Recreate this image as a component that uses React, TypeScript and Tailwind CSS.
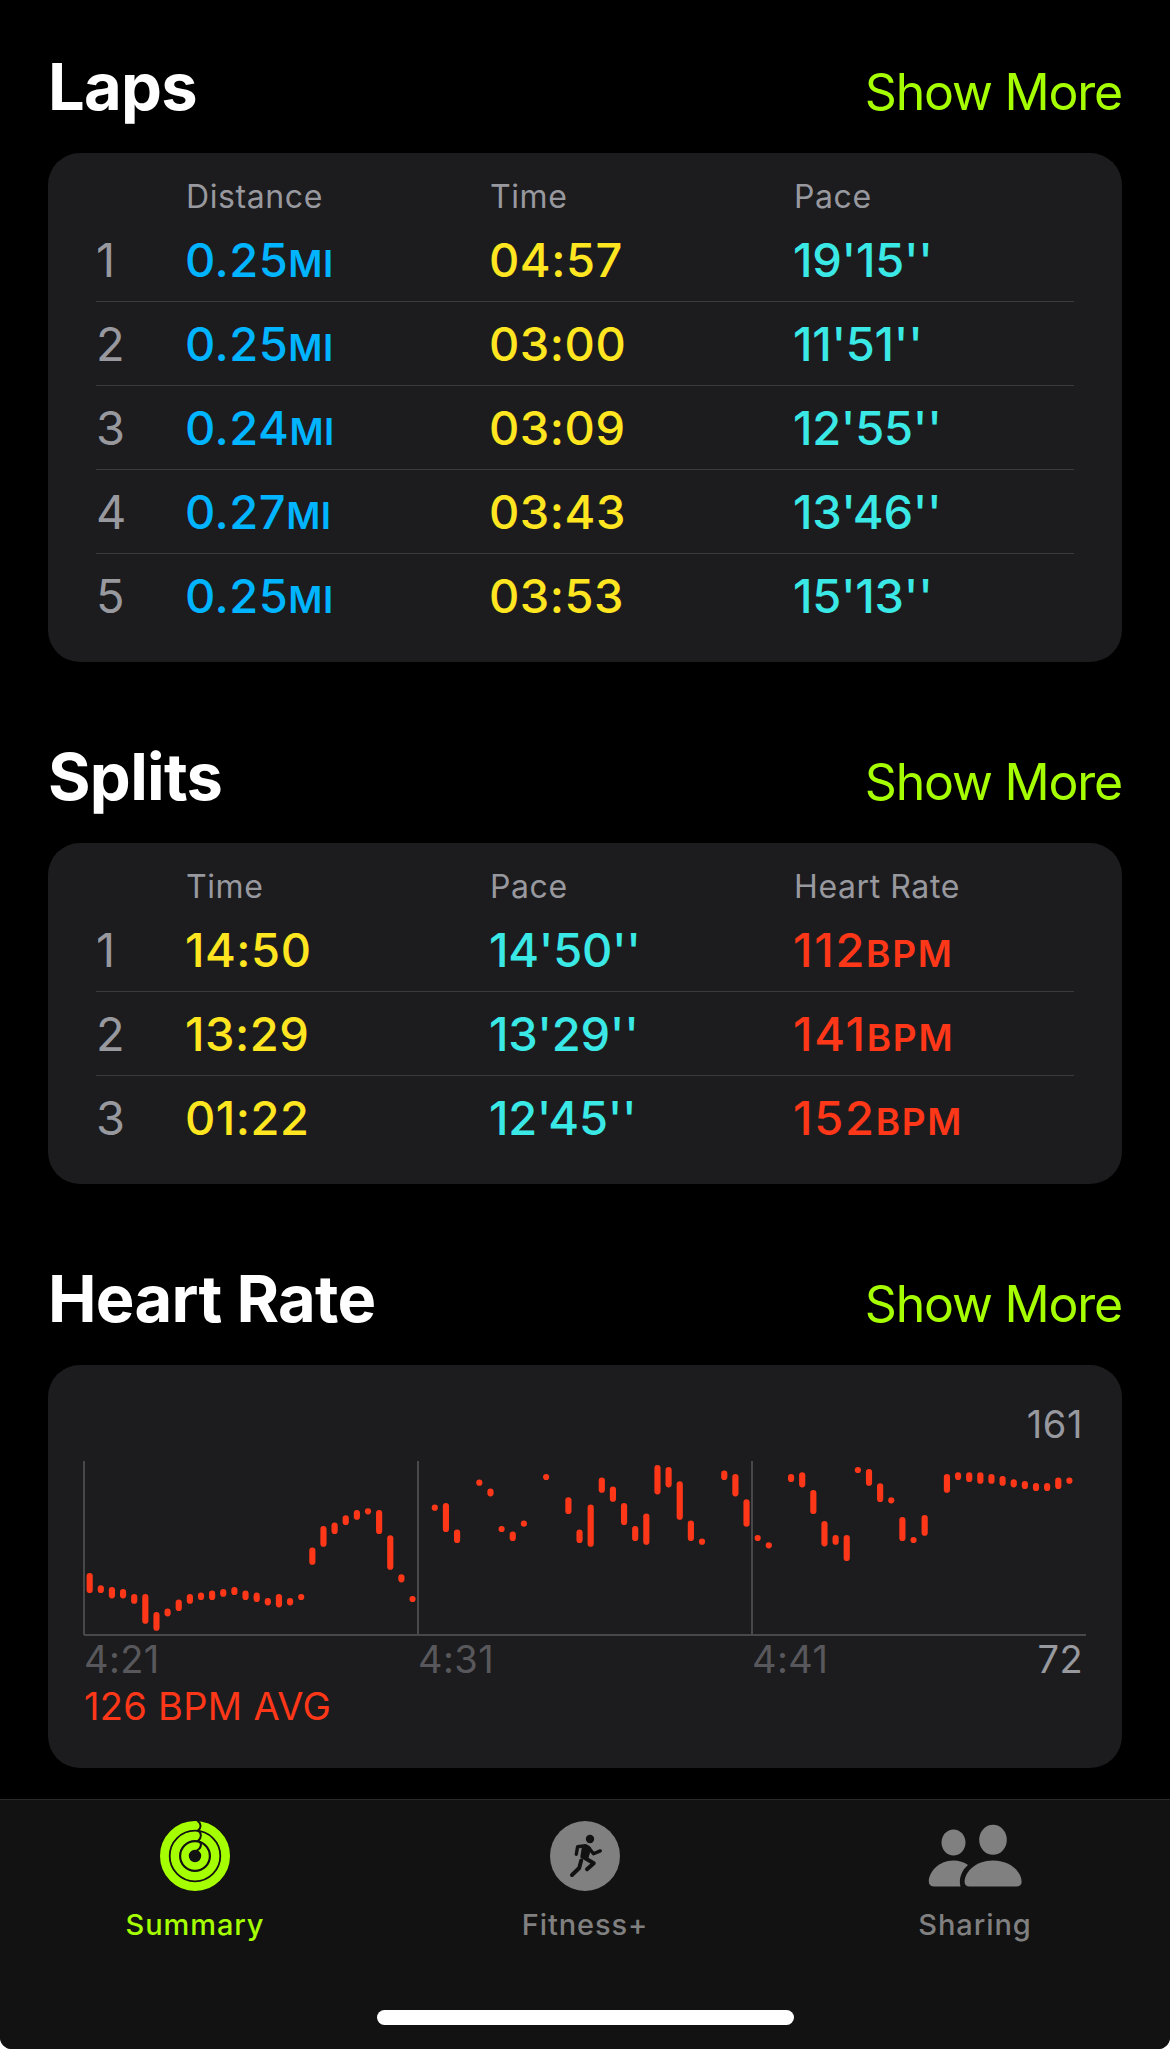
import clsx from "clsx";
import type { ReactNode } from "react";

type Cell = { value: string; unit?: string; color: string };

const BLUE = "text-[#00b4ff] tracking-[0.5px]";
const YELLOW = "text-[#ffe620] tracking-[0.5px]";
const CYAN = "text-[#3ae8e6] tracking-[-0.3px]";
const RED = "text-[#ff3719] tracking-[1.7px]";

const laps: Cell[][] = [
  [{ value: "0.25", unit: "MI", color: BLUE }, { value: "04:57", color: YELLOW }, { value: "19'15''", color: CYAN }],
  [{ value: "0.25", unit: "MI", color: BLUE }, { value: "03:00", color: YELLOW }, { value: "11'51''", color: CYAN }],
  [{ value: "0.24", unit: "MI", color: BLUE }, { value: "03:09", color: YELLOW }, { value: "12'55''", color: CYAN }],
  [{ value: "0.27", unit: "MI", color: BLUE }, { value: "03:43", color: YELLOW }, { value: "13'46''", color: CYAN }],
  [{ value: "0.25", unit: "MI", color: BLUE }, { value: "03:53", color: YELLOW }, { value: "15'13''", color: CYAN }],
];

const splits: Cell[][] = [
  [{ value: "14:50", color: YELLOW }, { value: "14'50''", color: CYAN }, { value: "112", unit: "BPM", color: RED }],
  [{ value: "13:29", color: YELLOW }, { value: "13'29''", color: CYAN }, { value: "141", unit: "BPM", color: RED }],
  [{ value: "01:22", color: YELLOW }, { value: "12'45''", color: CYAN }, { value: "152", unit: "BPM", color: RED }],
];

// [slot, top, bottom] in chart units, slots without a reading are left out
const heartRate = [
  [0, 399, 459], [1, 436, 459], [2, 441, 475], [3, 447, 475], [4, 462, 491], [5, 462, 551],
  [6, 516, 572], [7, 506, 529], [8, 479, 513], [9, 462, 491], [10, 458, 480], [11, 452, 480],
  [12, 447, 470], [13, 441, 465], [14, 452, 480], [15, 458, 486], [16, 474, 496], [17, 462, 502],
  [18, 474, 496], [19, 462, 480], [20, 323, 374], [21, 258, 320], [22, 248, 282], [23, 226, 255],
  [24, 210, 239], [25, 205, 223], [26, 210, 282], [27, 286, 389], [28, 403, 427], [29, 468, 486],
  [31, 194, 212], [32, 189, 276], [33, 269, 309], [35, 119, 137], [36, 146, 169], [37, 258, 276],
  [38, 275, 303], [39, 242, 260], [41, 102, 120], [43, 172, 222], [44, 269, 309], [45, 194, 320],
  [46, 113, 158], [47, 140, 185], [48, 189, 255], [49, 258, 303], [50, 221, 314], [51, 75, 163],
  [52, 81, 142], [53, 124, 239], [54, 242, 303], [55, 296, 314], [57, 92, 120], [58, 102, 169],
  [59, 178, 260], [60, 285, 303], [61, 307, 325], [63, 102, 126], [64, 97, 142], [65, 150, 222],
  [66, 243, 319], [67, 285, 314], [68, 285, 363], [69, 81, 99], [70, 87, 137], [71, 130, 186],
  [72, 172, 190], [73, 231, 303], [74, 291, 309], [75, 225, 287], [77, 102, 158], [78, 97, 120],
  [79, 97, 126], [80, 97, 131], [81, 102, 131], [82, 108, 137], [83, 118, 142], [84, 123, 147],
  [85, 129, 153], [86, 129, 153], [87, 113, 147], [88, 113, 131],
];

const Section = ({ title, className, children }: { title: string; className?: string; children: ReactNode }) => (
  <section className={className}>
    <div className="flex h-[105px] items-baseline justify-between">
      <h2 className="text-[65px] font-bold leading-[78px] tracking-[-0.7px] text-white">{title}</h2>
      <button className="text-[50px] leading-[60px] tracking-[-1.2px] text-[#a6ff00]">Show More</button>
    </div>
    <div className="rounded-[32px] bg-[#1c1c1e]">{children}</div>
  </section>
);

const Table = ({ columns, rows }: { columns: string[]; rows: Cell[][] }) => (
  <div className="px-12 py-6">
    <div className="flex h-[41px] pl-[90px] text-[32px] leading-10 tracking-[0.6px] text-[#98989f]">
      {columns.map((column) => (
        <div key={column} className="w-[304px] shrink-0">{column}</div>
      ))}
    </div>
    {rows.map((row, i) => (
      <div
        key={i}
        className={clsx("flex h-[84px] items-baseline pt-px leading-[82px]", i < rows.length - 1 && "border-b border-[#3b3b3d]")}
      >
        <div className="w-[89px] shrink-0 text-[47px] text-[#98989f]">{i + 1}</div>
        {row.map((cell, j) => (
          <div key={j} className={clsx("w-[304px] shrink-0 whitespace-nowrap text-[47px] font-medium", cell.color)}>
            {cell.value}
            {cell.unit && <span className="text-[37px] font-semibold">{cell.unit}</span>}
          </div>
        ))}
      </div>
    ))}
  </div>
);

const HeartRateChart = () => (
  <div className="h-[403px] pl-[35px] pr-9 pt-9">
    <div className="h-[60px] pr-[3px] text-right text-[38px] leading-[46px] tracking-[0.6px] text-[#98989f]">161</div>
    <svg className="block h-[175px] w-[1003px]" viewBox="0 63 3009 525">
      <path d="M3 63V585M1005 63V582M2007 63V582M3 585H3009" fill="none" stroke="#48484a" strokeWidth="6" />
      {heartRate.map(([slot, top, bottom]) => (
        <line
          key={slot}
          x1={20 + slot * 33.4}
          x2={20 + slot * 33.4}
          y1={top + 9}
          y2={bottom - 8.9}
          stroke="#ff3719"
          strokeWidth="18.5"
          strokeLinecap="round"
        />
      ))}
    </svg>
    <div className="flex h-[47px] pl-px pr-[3px] text-[38px] leading-[46px] tracking-[0.4px] text-[#58585c]">
      <span className="w-[334px]">4:21</span>
      <span className="w-[334px]">4:31</span>
      <span>4:41</span>
      <span className="ml-auto text-[#98989f]">72</span>
    </div>
    <div className="pl-px text-[38px] leading-[46px] tracking-[0.3px] text-[#ff3719]">126 BPM AVG</div>
  </div>
);

const RingsIcon = () => (
  <svg className="h-[70px] w-[70px]" viewBox="0 0 70 70" fill="none">
    <circle cx="35" cy="35" r="30.6" stroke="#a6ff00" strokeWidth="8.8" />
    <circle cx="35" cy="35" r="20.2" stroke="#a6ff00" strokeWidth="8.4" />
    <circle cx="35" cy="35" r="10" stroke="#a6ff00" strokeWidth="7.6" />
    <path
      d="M37.5 0c4 2.5 4 7 .3 9.6c4 2 4 7 .3 10.2c4 2 4 7-1.6 10"
      stroke="#121212"
      strokeWidth="2"
    />
  </svg>
);

const RunnerIcon = () => (
  <svg className="h-[70px] w-[70px]" viewBox="0 0 70 70" fill="none">
    <circle cx="35" cy="35" r="35" fill="#808080" />
    <g stroke="#121212" strokeWidth="3.4" strokeLinecap="round" strokeLinejoin="round">
      <circle cx="40" cy="18" r="4.2" fill="#121212" stroke="none" />
      <path d="M26.3 33.2L27.6 25.7L35.5 24.6L38.5 26.5L43.5 32.8L50.3 29.9" />
      <path d="M33.5 26.5L39.5 27.5L36.8 36.5L32 35.8Z" fill="#121212" />
      <path d="M34 36.5L43.8 42.3L37 48.3" strokeWidth="4" />
      <path d="M31.2 39.5L29.2 47L22 54" strokeWidth="4" />
    </g>
  </svg>
);

const PeopleIcon = () => (
  <svg className="h-[70px] w-[94px]" viewBox="0 0 94 70" fill="#808080">
    <ellipse cx="25.5" cy="21.5" rx="12" ry="13" />
    <path d="M5.5 65.4C2.5 65.4 .8 63.5 .8 60.5C.8 52 10 39.6 25.5 39.6C31 39.6 36 41.3 40 44C33.5 49.5 30.5 58 32.5 65.4Z" />
    <ellipse cx="65" cy="18.8" rx="13.8" ry="15" />
    <path d="M41.5 65.4C38.5 65.4 36.6 64 36.6 61C36.6 51.5 47 39.6 65 39.6C83 39.6 93.6 51.5 93.6 61C93.6 64 91.5 65.4 88.5 65.4Z" />
  </svg>
);

const Tab = ({ label, active, icon }: { label: string; active?: boolean; icon: ReactNode }) => (
  <div className={clsx("flex w-[390px] flex-col items-center pt-[21px]", active ? "text-[#a6ff00]" : "text-[#808080]")}>
    {icon}
    <span className="mt-4 text-[29px] font-medium leading-9 tracking-[0.9px]">{label}</span>
  </div>
);

const App = () => {
  return (
    <div className="h-[2049px] w-[1170px] bg-white">
      <div className="flex h-full flex-col overflow-hidden rounded-b-[12px] bg-black font-['Inter',sans-serif]">
        <main className="h-[1799px] px-12 pt-12">
          <Section title="Laps" className="h-[690px]">
            <Table columns={["Distance", "Time", "Pace"]} rows={laps} />
          </Section>
          <Section title="Splits" className="h-[522px]">
            <Table columns={["Time", "Pace", "Heart Rate"]} rows={splits} />
          </Section>
          <Section title="Heart Rate">
            <HeartRateChart />
          </Section>
        </main>
        <nav className="flex h-[250px] flex-col justify-between border-t border-[#2a2a2a] bg-[#121212]">
          <div className="flex">
            <Tab label="Summary" active icon={<RingsIcon />} />
            <Tab label="Fitness+" icon={<RunnerIcon />} />
            <Tab label="Sharing" icon={<PeopleIcon />} />
          </div>
          <div className="mx-auto mb-6 h-[15px] w-[417px] rounded-full bg-white" />
        </nav>
      </div>
    </div>
  );
};

export default App;
